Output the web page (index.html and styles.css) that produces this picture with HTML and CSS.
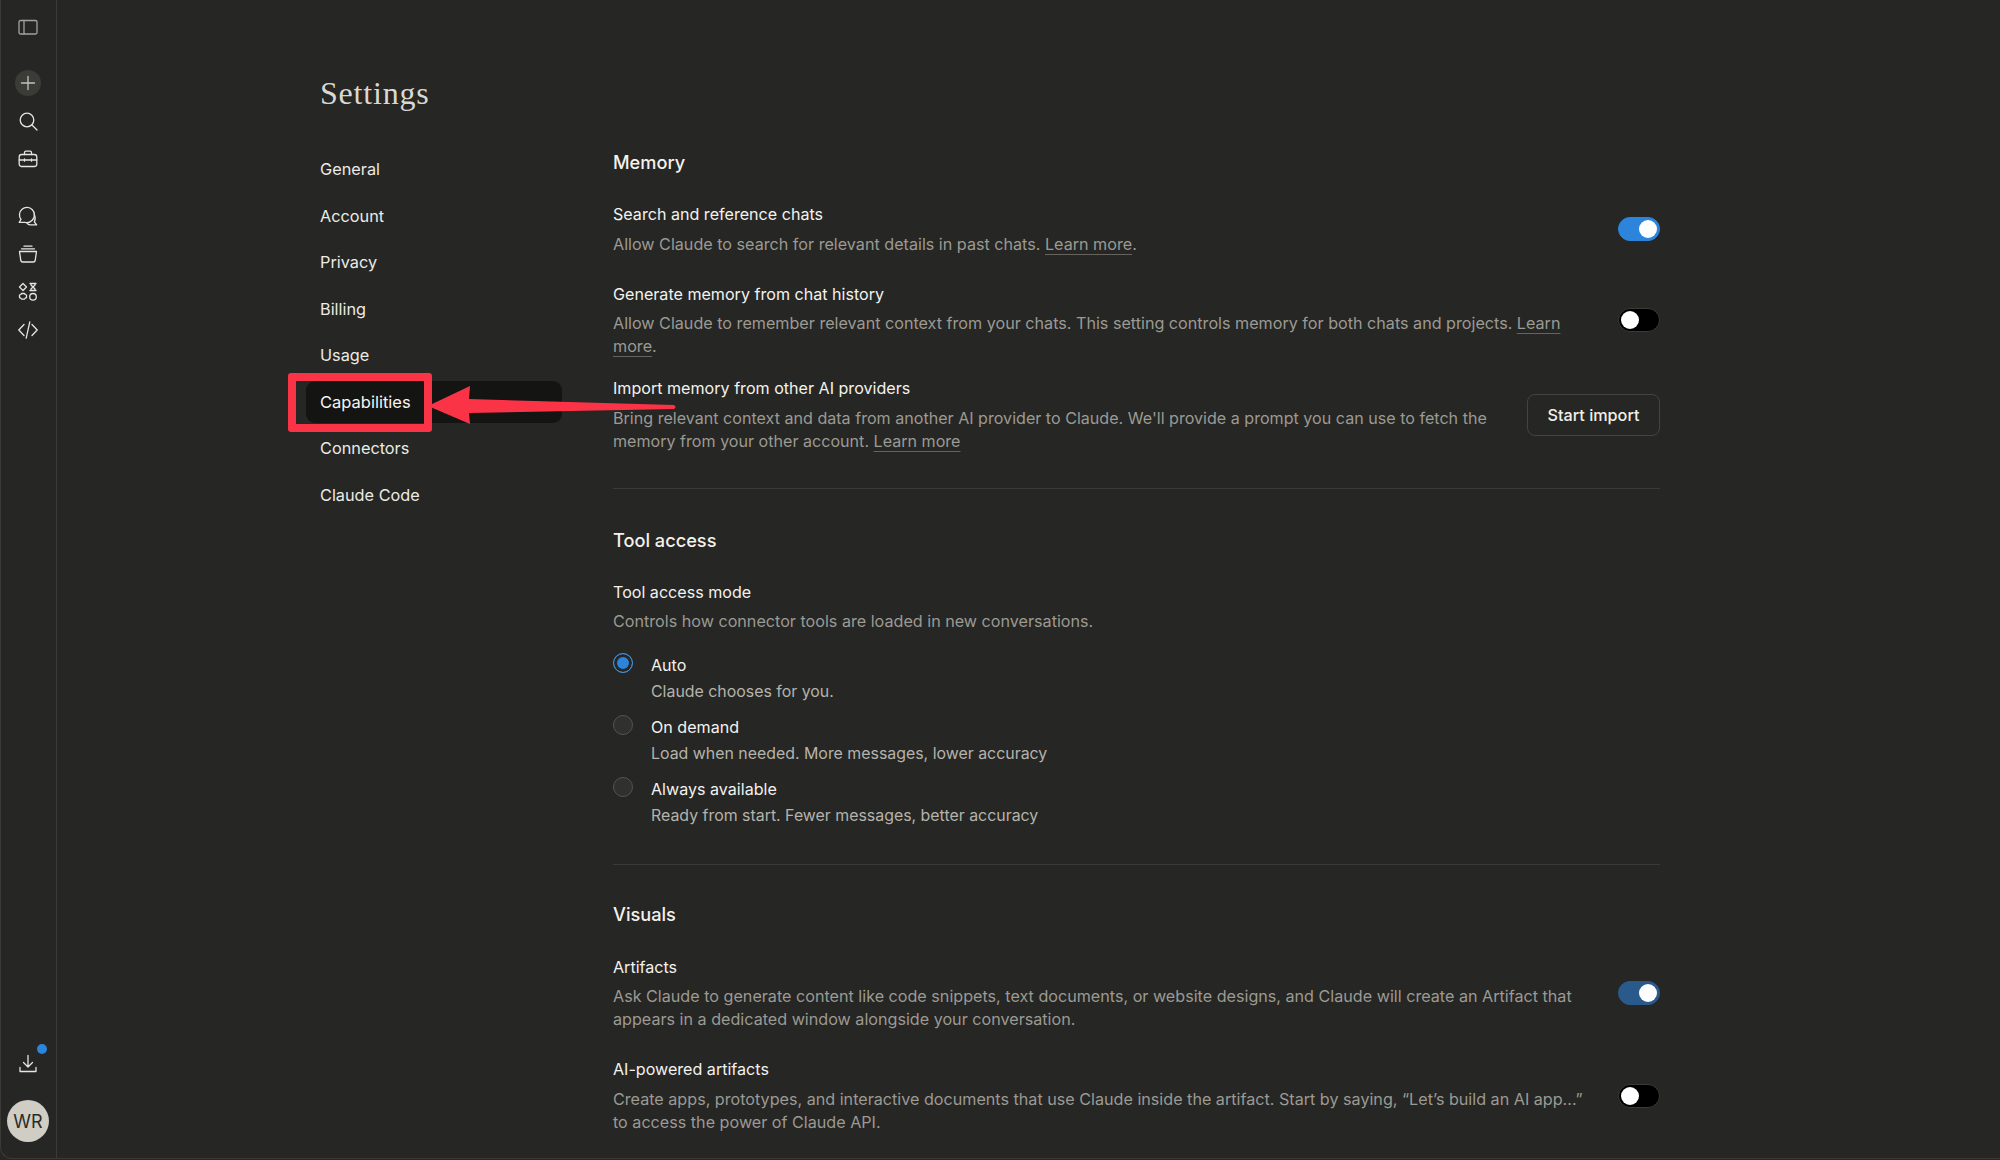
FILE: index.html
```html
<!DOCTYPE html>
<html lang="en">
<head>
	<meta charset="UTF-8">
	<meta name="viewport" content="width=device-width, initial-scale=1.0">
	<title>Settings</title>
	<link rel="stylesheet" href="styles.css">
</head>
<body>
	<div class="app">
		<aside class="rail">
			<div class="rail-top">
				<svg class="icon panel-icon" viewBox="0 0 20 20"><rect x="1" y="3.500" width="18" height="13.500" rx="1.500"/><path d="M6 3.500v13.500"/></svg>
				<div class="rail-group first">
					<span class="plus-btn"><svg class="icon" viewBox="0 0 20 20"><path d="M10 3.500v13M3.500 10h13"/></svg></span>
					<span class="rail-btn"><svg class="icon" viewBox="0 0 20 20"><circle cx="9" cy="9" r="6.800"/><path d="M14 14l5 5"/></svg></span>
					<span class="rail-btn"><svg class="icon" viewBox="0 0 20 20"><rect x="1.200" y="5.500" width="17.600" height="12" rx="2.500"/><path d="M6.500 5.500V3.600c0-.8.600-1.400 1.400-1.400h4.200c.8 0 1.400.6 1.400 1.400v1.900M1.200 11h17.600M6.500 9.800v2.400M13.500 9.800v2.400"/></svg></span>
				</div>
				<div class="rail-group">
					<span class="rail-btn"><svg class="icon" viewBox="0 0 20 20"><path d="M3 13.500L1.200 16.300h6M3 13.500A7.500 7.500 0 1 1 14.500 14 7.500 7.500 0 0 1 7.200 16.300"/><path d="M16.200 8.500c1.200 2.300 1.200 5.300.2 7.500l2.300 2.800h-6c-1.300 0-2.500-.5-3.500-1.400"/></svg></span>
					<span class="rail-btn"><svg class="icon" viewBox="0 0 20 20"><path d="M1.500 7.500h17l-1.300 9c-.2 1-.9 1.500-1.800 1.500H4.600c-.9 0-1.600-.5-1.800-1.500zM3.500 4.800h13M6 2.200h8"/></svg></span>
					<span class="rail-btn"><svg class="icon" viewBox="0 0 20 20"><path d="M5 1.500l3.500 3.500L5 8.500 1.500 5zM12 1.500h6M12 8.500h6M13 1.500v1.500l2 2-2 2v1.500M17 1.500v1.500l-2 2 2 2v1.500"/><circle cx="15" cy="14.800" r="3.300"/><path d="M3.600 11.500h2.800l.9 1 1.200.5v2.600l-1.200.5-.9 1H3.600l-.9-1-1.200-.5V13l1.200-.5z"/></svg></span>
					<span class="rail-btn"><svg class="icon" viewBox="0 0 20 20"><path d="M6 4.500L.8 10 6 15.500M14 4.500l5.200 5.500-5.200 5.500M11.800 1.800L8.200 18.200"/></svg></span>
				</div>
			</div>
			<div class="rail-bottom">
				<span class="download">
					<svg class="icon" viewBox="0 0 20 20"><path d="M10 1.500v11M5.500 8.500l4.500 4.500 4.500-4.500M2 13.500v4h16v-4"/></svg>
					<i class="dot"></i>
				</span>
				<span class="avatar">WR</span>
			</div>
		</aside>

		<div class="page">
			<h1 class="page-title">Settings</h1>
			<div class="columns">
				<nav class="side-nav">
					<a>General</a>
					<a>Account</a>
					<a>Privacy</a>
					<a>Billing</a>
					<a>Usage</a>
					<a class="active">Capabilities</a>
					<a>Connectors</a>
					<a>Claude Code</a>
				</nav>

				<main class="content">
					<section class="group">
						<h2>Memory</h2>
						<div class="row row-a">
							<div class="text">
								<h3>Search and reference chats</h3>
								<p>Allow Claude to search for relevant details in past chats. <u>Learn more</u>.</p>
							</div>
							<span class="toggle on"></span>
						</div>
						<div class="row row-b">
							<div class="text">
								<h3>Generate memory from chat history</h3>
								<p>Allow Claude to remember relevant context from your chats. This setting controls memory for both chats and projects. <u>Learn more</u>.</p>
							</div>
							<span class="toggle"></span>
						</div>
						<div class="row">
							<div class="text">
								<h3>Import memory from other AI providers</h3>
								<p class="narrow">Bring relevant context and data from another AI provider to Claude. We'll provide a prompt you can use to fetch the memory from your other account. <u>Learn more</u></p>
							</div>
							<button class="btn">Start import</button>
						</div>
					</section>

					<section class="group tools">
						<h2>Tool access</h2>
						<h3>Tool access mode</h3>
						<p>Controls how connector tools are loaded in new conversations.</p>
						<div class="radios">
							<div class="radio-row">
								<span class="radio checked"></span>
								<div><h4>Auto</h4><p>Claude chooses for you.</p></div>
							</div>
							<div class="radio-row">
								<span class="radio"></span>
								<div><h4>On demand</h4><p>Load when needed. More messages, lower accuracy</p></div>
							</div>
							<div class="radio-row">
								<span class="radio"></span>
								<div><h4>Always available</h4><p>Ready from start. Fewer messages, better accuracy</p></div>
							</div>
						</div>
					</section>

					<section class="group last">
						<h2>Visuals</h2>
						<div class="row row-a">
							<div class="text">
								<h3>Artifacts</h3>
								<p>Ask Claude to generate content like code snippets, text documents, or website designs, and Claude will create an Artifact that appears in a dedicated window alongside your conversation.</p>
							</div>
							<span class="toggle on dim"></span>
						</div>
						<div class="row">
							<div class="text">
								<h3>AI-powered artifacts</h3>
								<p>Create apps, prototypes, and interactive documents that use Claude inside the artifact. Start by saying, “Let’s build an AI app...” to access the power of Claude API.</p>
							</div>
							<span class="toggle"></span>
						</div>
					</section>
				</main>
			</div>
		</div>
	</div>

	<!-- annotation drawn over the screenshot -->
	<div class="mark-box"></div>
	<svg class="mark-arrow" width="260" height="60" viewBox="0 0 260 60"><path d="M2 33L44 13 43 26 248 32Q251 34 248 36L43 40 44 51z"/></svg>
</body>
</html>
```

FILE: styles.css
```css
*{
	box-sizing: border-box;
}
html, body{
	margin: 0;
	height: 100%;
	overflow: hidden;
	background: #262624;
}
body{
	font-family: "Inter", "Noto Sans", sans-serif;
	color: #f3f2ee;
}
h1, h2, h3, h4, p{
	margin: 0;
	font-weight: normal;
}
.app{
	display: flex;
	height: 1159px;
	border-bottom: 1px solid #3a3a37;
	border-left: 1px solid #3a3a37;
	border-bottom-left-radius: 12px;
	overflow: hidden;
}
.icon{
	display: block;
	width: 20px;
	height: 20px;
	fill: none;
	stroke: #e6e5e0;
	stroke-width: 1.3;
	stroke-linecap: round;
	stroke-linejoin: round;
}

/* left rail */
.rail{
	width: 56px;
	flex: none;
	border-right: 1px solid #3a3a37;
	display: flex;
	flex-direction: column;
	justify-content: space-between;
	align-items: center;
	padding: 17px 1px 16px 0;
}
.rail-top, .rail-bottom{
	display: flex;
	flex-direction: column;
	align-items: center;
}
.panel-icon{
	stroke: #a3a29c;
}
.rail-group{
	display: flex;
	flex-direction: column;
	align-items: center;
	gap: 14px;
	margin-top: 33px;
}
.rail-group.first{
	gap: 13px;
	margin-top: 33px;
}
.rail-btn{
	display: block;
	width: 24px;
	height: 24px;
	padding: 2px;
}
.rail-group.first .rail-btn:last-child{
	margin-top: 1px;
}
.plus-btn{
	display: block;
	width: 26px;
	height: 26px;
	padding: 3px;
	border-radius: 50%;
	background: #3b3b38;
}
.plus-btn .icon{
	stroke: #c4c3bc;
}
.download{
	position: relative;
	display: block;
	margin-bottom: 26px;
}
.dot{
	position: absolute;
	top: -10px;
	right: -9px;
	width: 10px;
	height: 10px;
	border-radius: 50%;
	background: #2c84db;
}
.avatar{
	display: flex;
	align-items: center;
	justify-content: center;
	width: 42px;
	height: 42px;
	border-radius: 50%;
	background: #cfcdc4;
	color: #2b2b29;
	font-size: 18px;
}

/* page */
.page{
	flex: 1;
	padding: 70px 0 0 249px;
}
.page-title{
	font-family: "Liberation Serif", serif;
	font-size: 32px;
	line-height: 46px;
	letter-spacing: .8px;
	color: #d9d8d2;
	padding-left: 14px;
}
.columns{
	display: flex;
	gap: 51px;
	margin-top: 17px;
}
.side-nav{
	width: 256px;
	flex: none;
	display: flex;
	flex-direction: column;
	gap: 4.5px;
	padding-top: 15px;
}
.side-nav a{
	display: block;
	height: 42px;
	line-height: 42px;
	padding-left: 14px;
	border-radius: 9px;
	font-size: 16.3px;
	color: #ecebe6;
}
.side-nav a.active{
	background: #141413;
	color: #f6f5f1;
	font-size: 16.5px;
}

.content{
	width: 1047px;
	padding-top: 17px;
}
.group{
	padding-bottom: 35px;
	border-bottom: 1px solid #3a3a37;
	margin-bottom: 39px;
}
.group.tools{
	padding-bottom: 37px;
}
.group.last{
	border-bottom: 0;
	margin-bottom: 0;
}
.group h2{
	font-size: 18.2px;
	font-weight: 500;
	line-height: 24px;
	margin-bottom: 29px;
}
.group.last h2{
	margin-top: -2px;
	margin-bottom: 30px;
}
.group h3, .group h4{
	font-size: 16.1px;
	line-height: 22px;
	color: #f3f2ee;
}
.group h3 + p{
	margin-top: 7.5px;
}
.group p{
	font-size: 16.15px;
	line-height: 23px;
	color: #9b9a93;
}
.group u{
	text-decoration-color: #65645f;
	text-underline-offset: 4px;
}
.group p.narrow{
	font-size: 16.1px;
}
.row{
	display: flex;
	justify-content: space-between;
	align-items: center;
	gap: 30px;
}
.row-a{
	margin-bottom: 27px;
}
.row-b{
	margin-bottom: 19px;
}
.text{
	flex: 1;
	max-width: 975px;
}
.toggle{
	position: relative;
	flex: none;
	width: 42px;
	height: 24px;
	border-radius: 12px;
	background: #000;
	border: 1px solid #3a3a37;
}
.toggle::after{
	content: "";
	position: absolute;
	top: 2px;
	left: 2px;
	width: 18px;
	height: 18px;
	border-radius: 50%;
	background: #fff;
}
.toggle.on{
	background: #2c84db;
	border-color: #2c84db;
}
.toggle.on::after{
	left: 20px;
}
.toggle.dim{
	background: #2a5a8c;
	border-color: #2a5a8c;
}
.btn{
	flex: none;
	width: 133px;
	height: 42px;
	background: transparent;
	border: 1px solid #44443f;
	border-radius: 8px;
	color: #f0efea;
	font: 500 16.2px "Inter", "Noto Sans", sans-serif;
}

.radios{
	display: flex;
	flex-direction: column;
	gap: 12.5px;
	margin-top: 20px;
}
.radio-row{
	display: flex;
	gap: 18px;
}
.radio-row h4{
	line-height: 24px;
	margin-bottom: 2.5px;
}
.group .radio-row p{
	font-size: 15.9px;
	line-height: 23px;
	color: #b4b3ac;
}
.radio{
	flex: none;
	width: 20px;
	height: 20px;
	border-radius: 50%;
	background: #30302e;
	border: 1px solid #55544f;
}
.radio.checked{
	background: #2c84db;
	border: 1.5px solid #4d93d8;
	box-shadow: inset 0 0 0 3px #262624;
}

/* red annotation */
.mark-box{
	position: absolute;
	left: 288px;
	top: 373px;
	width: 144px;
	height: 59px;
	border: 8px solid #fb3347;
	border-radius: 3px;
}
.mark-arrow{
	position: absolute;
	left: 426px;
	top: 373px;
	fill: #fb3347;
}
```
